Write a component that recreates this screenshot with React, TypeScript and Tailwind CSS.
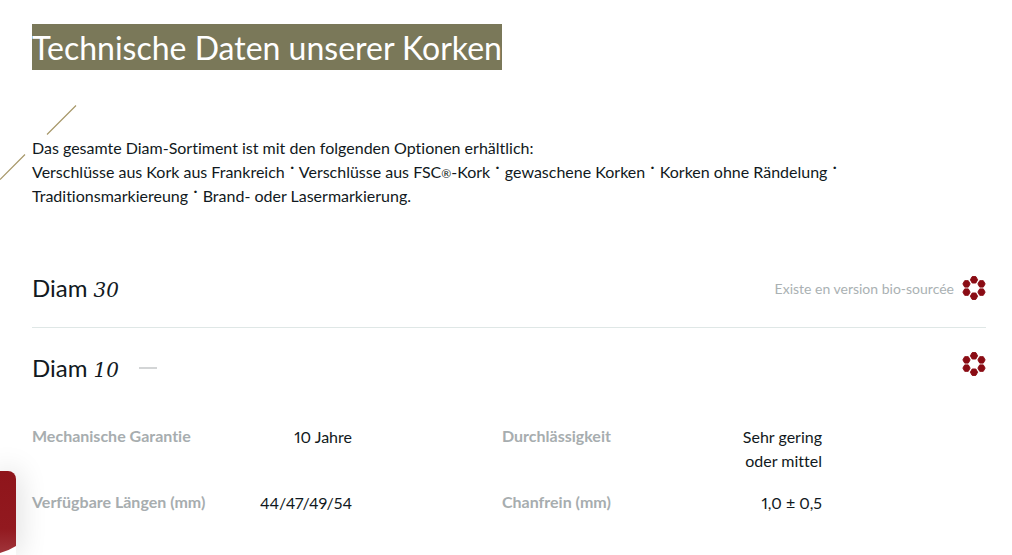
import React from 'react';

const specs = [
  { label: 'Mechanische Garantie', value: '10 Jahre' },
  { label: 'Durchlässigkeit', value: 'Sehr gering oder mittel' },
  { label: 'Verfügbare Längen (mm)', value: '44/47/49/54' },
  { label: 'Chanfrein (mm)', value: '1,0 ± 0,5' },
];

const BioIcon = () => (
  <svg
    className="h-6 w-6 shrink-0"
    viewBox="0 0 24 24"
    fill="#8a0c14"
    stroke="#8a0c14"
    strokeWidth="1"
    strokeLinejoin="round"
    aria-hidden="true"
  >
    <path d="M10.2 .6h3.6l1.8 3.2L13.8 7h-3.6L8.4 3.8z" />
    <path d="M2.7 4.7h3.6l1.8 3.2-1.8 3.2H2.7L.9 7.9z" />
    <path d="M17.7 4.7h3.6l1.8 3.2-1.8 3.2h-3.6l-1.8-3.2z" />
    <path d="M2.7 12.9h3.6l1.8 3.2-1.8 3.2H2.7L.9 16.1z" />
    <path d="M17.7 12.9h3.6l1.8 3.2-1.8 3.2h-3.6l-1.8-3.2z" />
    <path d="M10.2 17h3.6l1.8 3.2-1.8 3.2h-3.6l-1.8-3.2z" />
  </svg>
);

const Dot = () => <span className="font-bold">˙</span>;

const App = () => {
  return (
    <div className="relative min-h-screen overflow-hidden bg-white pt-6 pr-[26px] pl-8 font-['Lato','Open_Sans',sans-serif] text-base text-[#111921] [font-variant-ligatures:none]">
      {/* Decorative strokes */}
      <svg className="absolute top-[104px] left-0 h-20 w-20" viewBox="0 0 80 80" stroke="#a8986a" strokeWidth="1.2" aria-hidden="true">
        <path d="M47 30.5L76 1.5M0 75.5L25 50.5" />
      </svg>

      <h1 className="w-fit bg-[#7a7859] pt-0.5 text-[32px] leading-11 text-white">Technische Daten unserer Korken</h1>

      <p className="relative mt-[66px]">
        Das gesamte Diam-Sortiment ist mit den folgenden Optionen erhältlich:
        <br />
        Verschlüsse aus Kork aus Frankreich <Dot /> Verschlüsse aus FSC<span className="text-xs">®</span>-Kork <Dot />{' '}
        gewaschene Korken <Dot /> Korken ohne Rändelung <Dot />
        <br />
        Traditionsmarkiereung <Dot /> Brand- oder Lasermarkierung.
      </p>

      <section className="mt-[41px] border-b border-[#dfe7e6]">
        <button type="button" className="flex h-[78px] w-full items-center">
          <span className="text-2xl">
            Diam <em className="font-['DejaVu_Serif',serif] text-xl">30</em>
          </span>
          <span className="ml-auto mr-2 pt-0.5 text-sm text-[#aab1b3]">Existe en version bio-sourcée</span>
          <BioIcon />
        </button>
      </section>

      <section>
        <button type="button" className="flex h-20 w-full items-center" aria-expanded="true">
          <span className="text-2xl">
            Diam <em className="font-['DejaVu_Serif',serif] text-xl">10</em>
          </span>
          <span className="ml-5 h-0.5 w-[18px] bg-[#d3d5d6]" />
          <span className="ml-auto pb-2">
            <BioIcon />
          </span>
        </button>
        <dl className="mt-4 grid grid-cols-[320px_320px] gap-x-[150px] gap-y-[17px]">
          {specs.map((spec) => (
            <div key={spec.label} className="flex justify-between">
              <dt className="font-bold text-[#a7adaf]">{spec.label}</dt>
              <dd className="w-24 pt-px text-right [font-feature-settings:'pnum']">{spec.value}</dd>
            </div>
          ))}
        </dl>
      </section>

      {/* Card peeking in from the left edge */}
      <div className="absolute top-[471px] left-0 h-[84px] w-4 rounded-tr-lg bg-white shadow-[0_0_30px_rgba(0,0,0,0.2)]">
        <svg className="h-full w-full rounded-tr-lg" viewBox="0 0 16 84" aria-hidden="true">
          <defs>
            <linearGradient id="red" x1="0" y1="0" x2="0" y2="1">
              <stop offset="0" stopColor="#8f151b" />
              <stop offset="0.7" stopColor="#92191f" />
              <stop offset="1" stopColor="#a0343a" />
            </linearGradient>
          </defs>
          <path d="M0 0h16v75Q8 80 0 82z" fill="url(#red)" />
        </svg>
      </div>
    </div>
  );
};

export default App;
